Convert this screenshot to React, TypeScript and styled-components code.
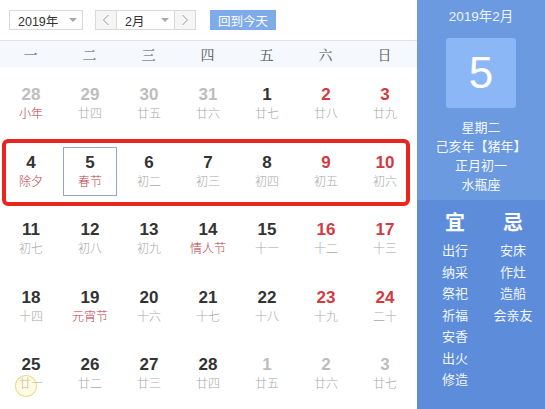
import styled, { createGlobalStyle, css } from "styled-components";

const Global = createGlobalStyle`
  html, body { margin: 0; padding: 0; background: #fff; }
  body { font-family: "Liberation Sans", "Noto Sans CJK SC", sans-serif; }
`;

const Page = styled.div`
  width: 545px;
  height: 409px;
  display: flex;
  overflow: hidden;
  position: relative;
`;

const Main = styled.div`
  width: 417px;
  display: flex;
  flex-direction: column;
`;

const Toolbar = styled.div`
  height: 41px;
  box-sizing: border-box;
  padding: 0 0 0 9px;
  display: flex;
  align-items: center;
  border-bottom: 1px solid #e2e2e2;
`;

const Select = styled.div<{ w: number }>`
  width: ${(p) => p.w}px;
  height: 20px;
  box-sizing: border-box;
  border: 1px solid #d9d9d9;
  background: #fff;
  display: flex;
  align-items: center;
  justify-content: space-between;
  padding: 0 5px 0 8px;
  font-size: 12.5px;
  color: #333;
  font-family: "Liberation Sans", "Noto Sans CJK SC", sans-serif;
`;

const Caret = styled.span`
  width: 0;
  height: 0;
  border-left: 4px solid transparent;
  border-right: 4px solid transparent;
  border-top: 4px solid #a8a8a8;
`;

const Group = styled.div`
  display: flex;
  margin-left: 12px;
  height: 20px;
`;

const NavBtn = styled.div`
  width: 22px;
  height: 20px;
  box-sizing: border-box;
  border: 1px solid #d9d9d9;
  background: #f5f5f5;
  display: flex;
  align-items: center;
  justify-content: center;
  & + * { margin-left: -1px; }
`;

const MonthSelect = styled(Select)`
  margin-right: -1px;
  background: #fff;
`;

const TodayBtn = styled.div`
  margin-left: 14px;
  width: 66px;
  height: 20px;
  background: #80abeb;
  color: #fff;
  font-size: 12.5px;
  display: flex;
  align-items: center;
  justify-content: center;
  font-family: "Noto Sans CJK SC", sans-serif;
`;

const WeekHead = styled.div`
  height: 26px;
  background: #f5f9fe;
  display: grid;
  grid-template-columns: repeat(7, 59px);
  padding-left: 1px;
  margin-bottom: 4px;
`;

const WeekDay = styled.div`
  display: flex;
  align-items: center;
  justify-content: center;
  font-size: 14px;
  color: #555;
  font-family: "Noto Serif CJK SC", "Noto Sans CJK SC", serif;
`;

const Row = styled.div<{ $marked?: boolean }>`
  height: 67.5px;
  display: grid;
  grid-template-columns: repeat(7, 59px);
  padding-left: 1px;
  position: relative;
  ${(p) =>
    p.$marked &&
    css`
      &::after {
        content: "";
        position: absolute;
        left: 2px;
        top: 0;
        width: 408px;
        height: 67px;
        box-sizing: border-box;
        border: 4px solid #e8261d;
        border-radius: 6px;
        pointer-events: none;
      }
    `}
`;

const Cell = styled.div`
  display: flex;
  align-items: center;
  justify-content: center;
`;

const CellInner = styled.div<{ $today?: boolean }>`
  width: 54px;
  height: 49px;
  margin-top: -2px;
  margin-left: 1px;
  box-sizing: border-box;
  border: 1px solid ${(p) => (p.$today ? "#91a9c2" : "transparent")};
  display: flex;
  flex-direction: column;
  align-items: center;
  justify-content: center;
`;

type Tone = "normal" | "muted" | "weekend";

const Num = styled.div<{ $tone: Tone }>`
  font-family: "Liberation Sans", Arial, sans-serif;
  font-weight: bold;
  font-size: 17px;
  line-height: 18px;
  color: ${(p) =>
    p.$tone === "muted" ? "#bdbdbd" : p.$tone === "weekend" ? "#d23a3f" : "#333"};
`;

const Lunar = styled.div<{ $fest?: boolean }>`
  font-family: "Noto Sans CJK SC", sans-serif;
  font-size: 12px;
  line-height: 16px;
  margin-top: 1px;
  font-weight: 300;
  color: ${(p) => (p.$fest ? "#b8393f" : "#a9a9a9")};
`;

const Side = styled.div`
  width: 128px;
  display: flex;
  flex-direction: column;
  color: #fff;
  font-family: "Noto Sans CJK SC", sans-serif;
`;

const SideTop = styled.div`
  background: #6b9ae0;
  height: 200px;
  display: flex;
  flex-direction: column;
  align-items: center;
`;

const SideMonth = styled.div`
  margin-top: 8px;
  font-size: 13.5px;
  line-height: 18px;
  color: #eef4ff;
  font-family: "Liberation Sans", "Noto Sans CJK SC", sans-serif;
`;

const DayBox = styled.div`
  margin-top: 12px;
  width: 70px;
  height: 70px;
  border-radius: 3px;
  background: #8bb7f6;
  display: flex;
  align-items: center;
  justify-content: center;
  font-family: "Liberation Sans", Arial, sans-serif;
  font-size: 44px;
  color: #fff;
`;

const Info = styled.div`
  margin-top: 9px;
  font-size: 13px;
  line-height: 19px;
  text-align: center;
  color: #f4f8ff;
`;

const SideBottom = styled.div`
  flex: 1;
  background: #5d8dda;
  display: grid;
  grid-template-columns: 58px 58px;
  padding: 9px 0 0 9px;
  align-content: start;
`;

const Column = styled.div`
  display: flex;
  flex-direction: column;
  align-items: center;
`;

const Big = styled.div`
  font-size: 20px;
  font-weight: bold;
  line-height: 26px;
  margin-bottom: 4px;
`;

const Item = styled.div`
  font-size: 13px;
  line-height: 21.5px;
  color: #f2f6ff;
`;

const Cursor = styled.div`
  position: absolute;
  left: 15px;
  top: 375px;
  width: 20px;
  height: 20px;
  border-radius: 50%;
  border: 1px solid rgba(220, 200, 90, 0.6);
  background: rgba(255, 240, 150, 0.25);
  pointer-events: none;
`;

type Day = { n: number; l: string; tone: Tone; fest?: boolean; today?: boolean };

const d = (n: number, l: string, tone: Tone = "normal", fest = false, today = false): Day => ({
  n,
  l,
  tone,
  fest,
  today,
});

const rows: Day[][] = [
  [d(28, "小年", "muted", true), d(29, "廿四", "muted"), d(30, "廿五", "muted"), d(31, "廿六", "muted"), d(1, "廿七"), d(2, "廿八", "weekend"), d(3, "廿九", "weekend")],
  [d(4, "除夕", "normal", true), d(5, "春节", "normal", true, true), d(6, "初二"), d(7, "初三"), d(8, "初四"), d(9, "初五", "weekend"), d(10, "初六", "weekend")],
  [d(11, "初七"), d(12, "初八"), d(13, "初九"), d(14, "情人节", "normal", true), d(15, "十一"), d(16, "十二", "weekend"), d(17, "十三", "weekend")],
  [d(18, "十四"), d(19, "元宵节", "normal", true), d(20, "十六"), d(21, "十七"), d(22, "十八"), d(23, "十九", "weekend"), d(24, "二十", "weekend")],
  [d(25, "廿一"), d(26, "廿二"), d(27, "廿三"), d(28, "廿四"), d(1, "廿五", "muted"), d(2, "廿六", "muted"), d(3, "廿七", "muted")],
];

const weekdays = ["一", "二", "三", "四", "五", "六", "日"];
const good = ["出行", "纳采", "祭祀", "祈福", "安香", "出火", "修造"];
const bad = ["安床", "作灶", "造船", "会亲友"];

function Chevron({ dir }: { dir: "left" | "right" }) {
  return (
    <svg width="8" height="12" viewBox="0 0 8 12">
      <path
        d={dir === "left" ? "M6.5 1 L1.5 6 L6.5 11" : "M1.5 1 L6.5 6 L1.5 11"}
        fill="none"
        stroke="#9a9a9a"
        strokeWidth="1"
      />
    </svg>
  );
}

export default function App() {
  return (
    <Page>
      <Global />
      <Main>
        <Toolbar>
          <Select w={74}>
            2019年
            <Caret />
          </Select>
          <Group>
            <NavBtn>
              <Chevron dir="left" />
            </NavBtn>
            <MonthSelect w={59}>
              2月
              <Caret />
            </MonthSelect>
            <NavBtn>
              <Chevron dir="right" />
            </NavBtn>
          </Group>
          <TodayBtn>回到今天</TodayBtn>
        </Toolbar>
        <WeekHead>
          {weekdays.map((w) => (
            <WeekDay key={w}>{w}</WeekDay>
          ))}
        </WeekHead>
        {rows.map((row, i) => (
          <Row key={i} $marked={i === 1}>
            {row.map((day, j) => (
              <Cell key={j}>
                <CellInner $today={day.today}>
                  <Num $tone={day.tone}>{day.n}</Num>
                  <Lunar $fest={day.fest}>{day.l}</Lunar>
                </CellInner>
              </Cell>
            ))}
          </Row>
        ))}
      </Main>
      <Side>
        <SideTop>
          <SideMonth>2019年2月</SideMonth>
          <DayBox>5</DayBox>
          <Info>
            <div>星期二</div>
            <div>己亥年【猪年】</div>
            <div>正月初一</div>
            <div>水瓶座</div>
          </Info>
        </SideTop>
        <SideBottom>
          <Column>
            <Big>宜</Big>
            {good.map((g) => (
              <Item key={g}>{g}</Item>
            ))}
          </Column>
          <Column>
            <Big>忌</Big>
            {bad.map((b) => (
              <Item key={b}>{b}</Item>
            ))}
          </Column>
        </SideBottom>
      </Side>
      <Cursor />
    </Page>
  );
}
